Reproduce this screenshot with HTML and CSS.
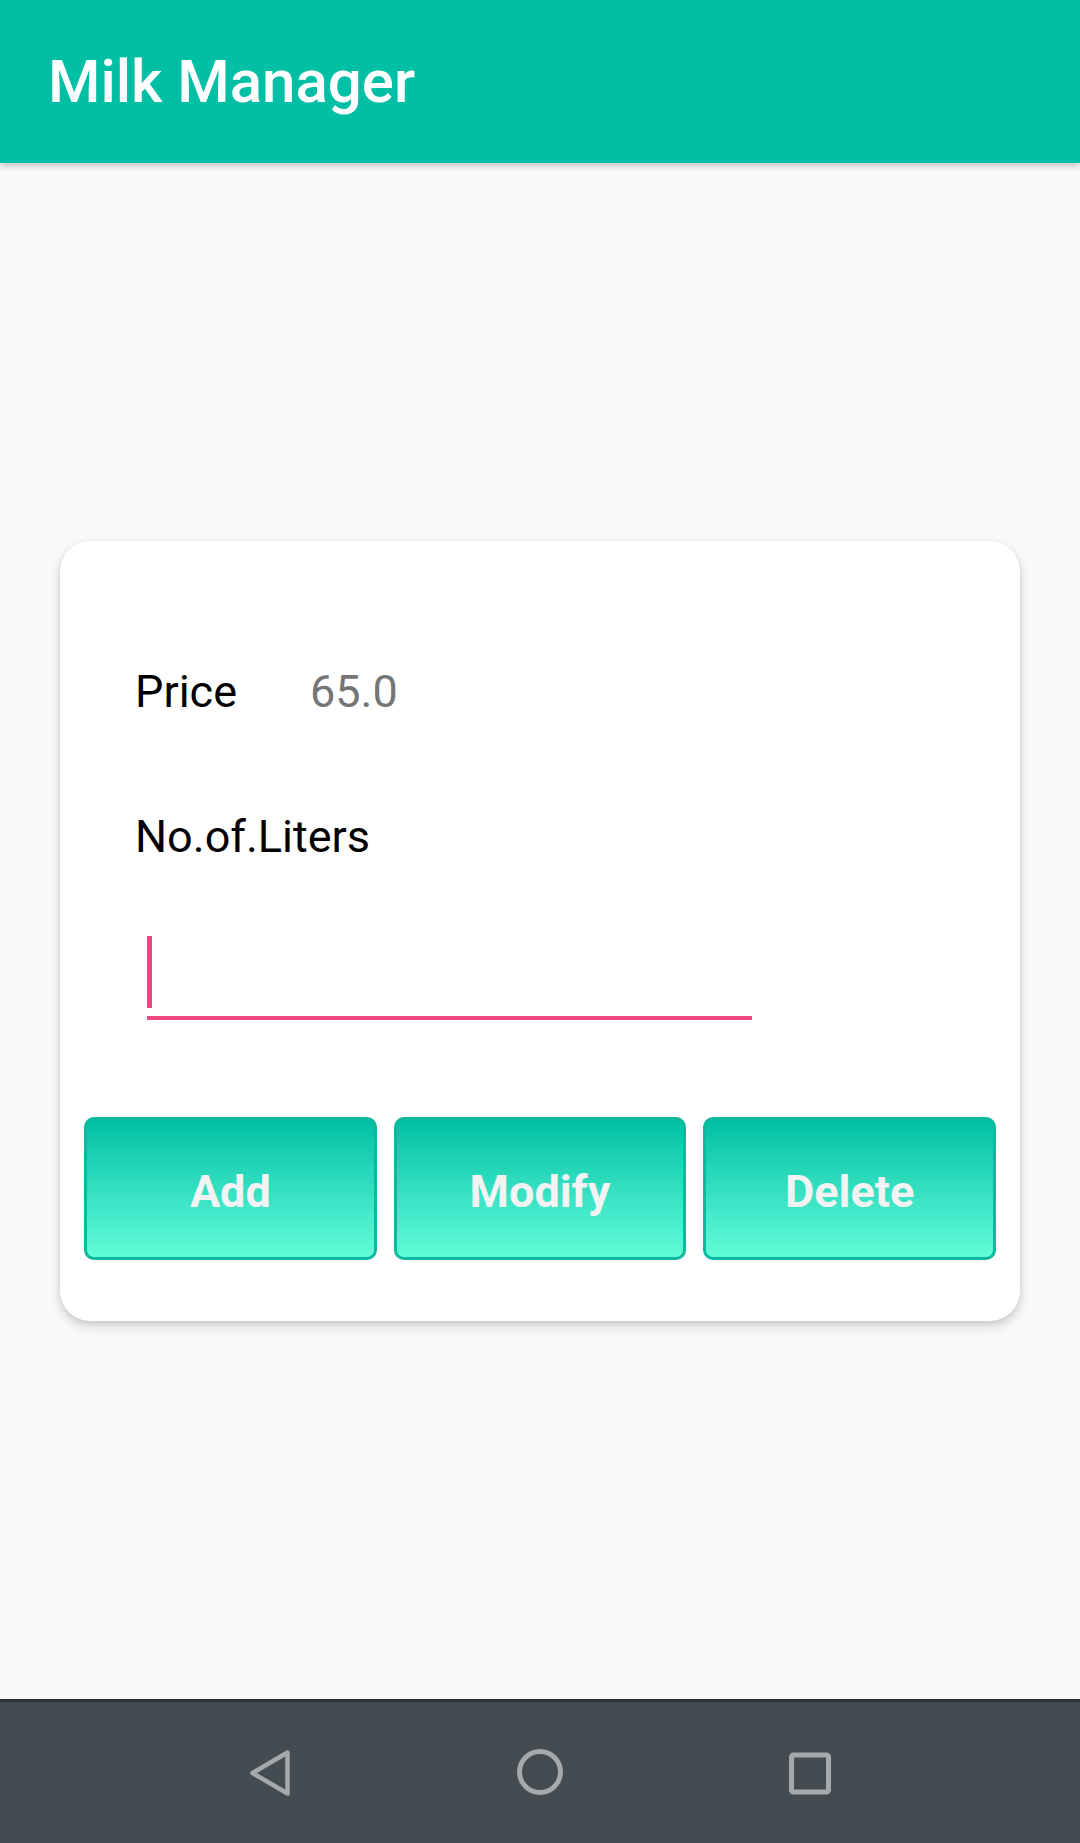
FILE: index.html
```html
<!DOCTYPE html>
<html lang="en">
<head>
<meta charset="utf-8">
<title>Milk Manager</title>
<link rel="stylesheet" href="styles.css">
</head>
<body>
<div class="screen">
  <header class="appbar">
    <h1 class="title">Milk Manager</h1>
  </header>
  <main class="content">
    <section class="card">
      <div class="row price-row">
        <span class="label">Price</span>
        <span class="value">65.0</span>
      </div>
      <div class="row liters-row">
        <span class="label">No.of.Liters</span>
      </div>
      <div class="input">
        <div class="cursor"></div>
      </div>
      <div class="actions">
        <button class="btn">Add</button>
        <button class="btn">Modify</button>
        <button class="btn">Delete</button>
      </div>
    </section>
  </main>
  <nav class="navbar">
    <svg class="nav-icon" viewBox="0 0 60 60" width="60" height="60" aria-label="Back">
      <path d="M47.5 9.5 L12.5 30 L47.5 50.5 Z" fill="none" stroke="#a3a9ac" stroke-width="4.5" stroke-linejoin="round"/>
    </svg>
    <svg class="nav-icon" viewBox="0 0 60 60" width="60" height="60" aria-label="Home">
      <circle cx="30" cy="29" r="20.5" fill="none" stroke="#a3a9ac" stroke-width="5"/>
    </svg>
    <svg class="nav-icon" viewBox="0 0 60 60" width="60" height="60" aria-label="Recents">
      <rect x="11.5" y="12" width="37" height="37" rx="2" fill="none" stroke="#a3a9ac" stroke-width="5"/>
    </svg>
  </nav>
</div>
</body>
</html>
```

FILE: styles.css
```css
* {
  box-sizing: border-box;
}

html, body {
  margin: 0;
  padding: 0;
}

body {
  font-family: Roboto, "Liberation Sans", sans-serif;
  background: #fafafa;
}

.screen {
  width: 1080px;
  height: 1843px;
  display: flex;
  flex-direction: column;
  overflow: hidden;
}

.appbar {
  height: 163px;
  flex: 0 0 163px;
  background: #00bfa5;
  display: flex;
  align-items: center;
  padding-left: 48px;
  box-shadow: 0 3px 7px rgba(0, 0, 0, 0.22);
  position: relative;
  z-index: 1;
}

.title {
  margin: 0;
  font-size: 60px;
  font-weight: 500;
  color: #ffffff;
  line-height: 70px;
}

.content {
  flex: 1 1 auto;
  display: flex;
  align-items: center;
  justify-content: center;
  background: #fafafa;
}

.card {
  width: 960px;
  background: #ffffff;
  border-radius: 30px;
  padding: 124px 24px 61px;
  box-shadow: 0 5px 12px rgba(0, 0, 0, 0.18), 0 1px 4px rgba(0, 0, 0, 0.08);
  display: flex;
  flex-direction: column;
}

.row {
  height: 54px;
  display: flex;
  align-items: center;
  padding-left: 51px;
  font-size: 45px;
  line-height: 54px;
}

.label {
  color: #000000;
}

.value {
  color: #757575;
  margin-left: 73px;
}

.liters-row {
  margin-top: 91px;
}

.input {
  margin-left: 63px;
  width: 605px;
  padding-top: 72px;
  padding-bottom: 8px;
  border-bottom: 4px solid #ee4683;
}

.cursor {
  width: 5px;
  height: 72px;
  background: #ee4683;
}

.actions {
  margin-top: 97px;
  display: grid;
  grid-template-columns: repeat(3, 1fr);
  gap: 17px;
}

.btn {
  height: 143px;
  border: 3px solid #0bb99f;
  border-radius: 10px;
  background: linear-gradient(to bottom, #02bfa4 0%, #33dfc0 50%, #62fcd8 100%);
  color: #f3f3f3;
  font-family: Roboto, "Liberation Sans", sans-serif;
  font-size: 45px;
  font-weight: 700;
  padding: 5px 0 0;
  cursor: pointer;
}

.navbar {
  height: 144px;
  flex: 0 0 144px;
  background: #454c51;
  border-top: 3px solid #2e3234;
  display: flex;
  align-items: center;
  justify-content: center;
  gap: 210px;
}

.nav-icon {
  display: block;
}
```
